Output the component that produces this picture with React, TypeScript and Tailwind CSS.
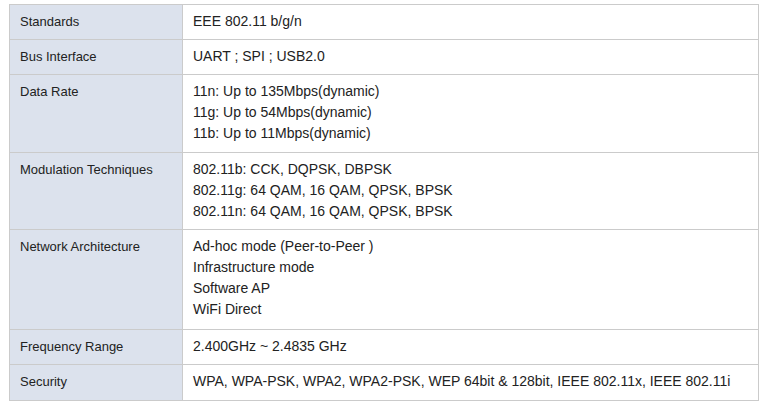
const rows: { label: string; values: string[]; pb: string }[] = [
  { label: 'Standards', values: ['EEE 802.11 b/g/n'], pb: 'pb-[7px]' },
  { label: 'Bus Interface', values: ['UART ; SPI ; USB2.0'], pb: 'pb-[7px]' },
  {
    label: 'Data Rate',
    values: ['11n: Up to 135Mbps(dynamic)', '11g: Up to 54Mbps(dynamic)', '11b: Up to 11Mbps(dynamic)'],
    pb: 'pb-[8px]',
  },
  {
    label: 'Modulation Techniques',
    values: ['802.11b: CCK, DQPSK, DBPSK', '802.11g: 64 QAM, 16 QAM, QPSK, BPSK', '802.11n: 64 QAM, 16 QAM, QPSK, BPSK'],
    pb: 'pb-[7px]',
  },
  {
    label: 'Network Architecture',
    values: ['Ad-hoc mode (Peer-to-Peer )', 'Infrastructure mode', 'Software AP', 'WiFi Direct'],
    pb: 'pb-[9px]',
  },
  { label: 'Frequency Range', values: ['2.400GHz ~ 2.4835 GHz'], pb: 'pb-[7px]' },
  {
    label: 'Security',
    values: ['WPA, WPA-PSK, WPA2, WPA2-PSK, WEP 64bit & 128bit, IEEE 802.11x, IEEE 802.11i'],
    pb: 'pb-[8px]',
  },
]

export default function App() {
  return (
    <main className="w-[768px] h-[410px] bg-white pt-[4px] pl-[9px] font-['Liberation_Sans',Arial,sans-serif] text-[13px] text-[#222]">
      <table className="w-[750px] border-collapse">
        <tbody>
          {rows.map((row) => (
            <tr key={row.label}>
              <td className={`w-[173px] align-top border border-[#cbcbcb] bg-[#dce2ed] pl-[10px] pt-[6px] ${row.pb} leading-[21px]`}>
                {row.label}
              </td>
              <td className={`align-top border border-[#cbcbcb] pl-[10px] pt-[6px] ${row.pb} leading-[21px] text-[14px]`}>
                {row.values.map((v) => (
                  <div key={v}>{v}</div>
                ))}
              </td>
            </tr>
          ))}
        </tbody>
      </table>
    </main>
  )
}
